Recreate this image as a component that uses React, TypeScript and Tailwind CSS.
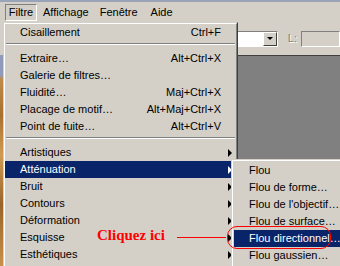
import React from 'react';

interface MenuItem {
  label: string;
  shortcut?: string;
  submenu?: boolean;
  active?: boolean;
  separator?: boolean;
}

const filterMenu: MenuItem[] = [
  { label: 'Cisaillement', shortcut: 'Ctrl+F' },
  { label: '', separator: true },
  { label: 'Extraire…', shortcut: 'Alt+Ctrl+X' },
  { label: 'Galerie de filtres…' },
  { label: 'Fluidité…', shortcut: 'Maj+Ctrl+X' },
  { label: 'Placage de motif…', shortcut: 'Alt+Maj+Ctrl+X' },
  { label: 'Point de fuite…', shortcut: 'Alt+Ctrl+V' },
  { label: '', separator: true },
  { label: 'Artistiques', submenu: true },
  { label: 'Atténuation', submenu: true, active: true },
  { label: 'Bruit', submenu: true },
  { label: 'Contours', submenu: true },
  { label: 'Déformation', submenu: true },
  { label: 'Esquisse', submenu: true },
  { label: 'Esthétiques', submenu: true },
];

const blurMenu = [
  { label: 'Flou' },
  { label: 'Flou de forme…' },
  { label: "Flou de l'objectif…" },
  { label: 'Flou de surface…' },
  { label: 'Flou directionnel…', active: true },
  { label: 'Flou gaussien…' },
];

function Arrow({ white }: { white?: boolean }) {
  return (
    <span
      className={`w-0 h-0 border-t-[4px] border-b-[4px] border-t-transparent border-b-transparent border-l-[4px] ${
        white ? 'border-l-white' : 'border-l-black'
      }`}
    />
  );
}

export default function App() {
  return (
    <div className="relative w-[340px] h-[266px] overflow-hidden bg-[#d4d0c8] text-[11px] text-black font-['Liberation_Sans',Arial,sans-serif]">
      <div className="h-[2px] bg-[#9aa4b8]" />

      {/* Menu bar */}
      <div className="h-[20px] flex items-start pt-[2px] pl-[5px]">
        <div className="w-[32px] h-[17px] flex items-center justify-center border border-t-[#808080] border-l-[#808080] border-b-white border-r-white">
          Filtre
        </div>
        <div className="h-[17px] flex items-center ml-[6px]">Affichage</div>
        <div className="h-[17px] flex items-center ml-[11px]">Fenêtre</div>
        <div className="h-[17px] flex items-center ml-[13px]">Aide</div>
      </div>

      {/* Options bar */}
      <div className="h-[33px] flex items-center justify-end">
        <div className="w-[60px] h-[16px] flex justify-end bg-white border border-t-[#808080] border-l-[#808080] border-b-white border-r-white">
          <div className="w-[14px] h-[14px] flex items-center justify-center bg-[#d4d0c8] border border-t-white border-l-white border-b-[#404040] border-r-[#404040]">
            <span className="w-0 h-0 border-l-[3px] border-r-[3px] border-t-[3px] border-l-transparent border-r-transparent border-t-black" />
          </div>
        </div>
        <span className="ml-[10px] text-[#808080] [text-shadow:1px_1px_0_#fff]">L:</span>
        <div className="ml-[4px] w-[39px] h-[16px] bg-[#d4d0c8] border border-t-[#808080] border-l-[#808080] border-b-white border-r-white" />
      </div>

      {/* Workspace */}
      <div className="flex h-[211px]">
        <div className="w-[3px] bg-[linear-gradient(180deg,#8f9bb8_0px,#8f9bb8_20px,#c08a48_24px,#a8702e_60px,#d09a52_100px,#9a6428_150px,#c8904a_211px)]" />
        <div className="flex-1 bg-[#808080] border-t border-[#404040]" />
      </div>

      {/* Filtre menu */}
      <div className="absolute left-[3px] top-[22px] w-[235px] border border-t-[#d4d0c8] border-l-[#d4d0c8] border-r-[#404040] border-b-[#404040]">
        <div className="bg-[#d4d0c8] pb-[20px] border border-t-white border-l-white border-r-[#808080] border-b-[#808080]">
          {filterMenu.map((item, i) =>
            item.separator ? (
              <div key={i} className="h-[9px] pt-[2px] px-[1px]">
                <div className="h-px bg-[#808080]" />
                <div className="h-px bg-white" />
              </div>
            ) : (
              <div
                key={i}
                className={`h-[17px] flex items-center justify-between pl-[15px] ${
                  item.submenu ? 'pr-[4px]' : 'pr-[15px]'
                } ${item.active ? 'bg-[#0a246a] text-white' : ''}`}
              >
                <span>{item.label}</span>
                {item.shortcut && <span>{item.shortcut}</span>}
                {item.submenu && <Arrow white={item.active} />}
              </div>
            )
          )}
        </div>
      </div>

      {/* Atténuation submenu */}
      <div className="absolute left-[231px] top-[159px] w-[130px] border border-t-[#d4d0c8] border-l-[#d4d0c8] border-r-[#404040] border-b-[#404040]">
        <div className="bg-[#d4d0c8] p-[1px] pb-[20px] border border-t-white border-l-white border-r-[#808080] border-b-[#808080]">
          {blurMenu.map((item) => (
            <div
              key={item.label}
              className={`h-[17px] flex items-center pl-[15px] ${
                item.active ? 'bg-[#0a246a] text-white' : ''
              }`}
            >
              {item.label}
            </div>
          ))}
        </div>
      </div>

      {/* Annotation */}
      <div className="absolute left-[97px] top-[228px] leading-none text-[15px] font-bold text-[#f00] font-['Liberation_Serif','Times_New_Roman',serif]">
        Cliquez ici
      </div>
      <div className="absolute left-[177px] top-[237px] w-[49px] h-px bg-[#f00]" />
      <div className="absolute left-[227px] top-[226px] w-[104px] h-[23px] border border-[#f00] rounded-[10px]" />
    </div>
  );
}
